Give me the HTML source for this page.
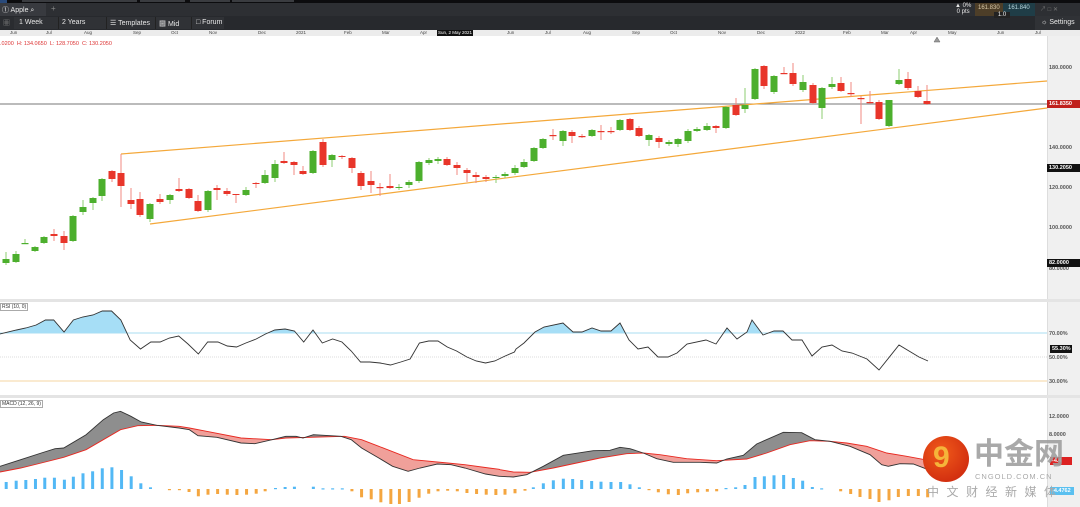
<!DOCTYPE html>
<html><head><meta charset="utf-8">
<style>
*{margin:0;padding:0;box-sizing:border-box}
body{width:1080px;height:507px;overflow:hidden;background:#fff;font-family:"Liberation Sans","Noto Sans CJK SC",sans-serif;position:relative}
.abs{position:absolute}
.t{color:#e8e8e8;font-size:7px;white-space:nowrap}
.ax{position:absolute;left:1049px;font-size:5.5px;color:#555;font-weight:bold}
.lbl{position:absolute;left:1047px;width:33px;height:8px;font-size:5.5px;color:#fff;font-weight:bold;padding-left:2px;line-height:8px}
</style></head><body>
<div class="abs" style="left:0;top:0;width:1080px;height:3px;background:#0c0c0e"></div>
<div class="abs" style="left:22px;top:0;width:115px;height:2px;background:#3a3c40"></div>
<div class="abs" style="left:140px;top:0;width:45px;height:2px;background:#3a3c40"></div>
<div class="abs" style="left:190px;top:0;width:40px;height:2px;background:#3a3c40"></div>
<div class="abs" style="left:232px;top:0;width:62px;height:2px;background:#3a3c40"></div>
<div class="abs" style="left:0;top:0;width:7px;height:3px;background:#2a4a7a"></div>
<div class="abs" style="left:0;top:3px;width:1080px;height:13px;background:#2d2f33"></div>
<div class="abs" style="left:0;top:3px;width:46px;height:13px;background:#383a3f"></div>
<div class="abs t" style="left:2px;top:5px">&#9312; Apple &#8981;</div>
<div class="abs t" style="left:51px;top:4px;color:#888;font-size:8px">+</div>
<div class="abs" style="left:0;top:16px;width:1080px;height:14px;background:#27292d"></div>
<div class="abs" style="left:0;top:17px;width:224px;height:12px;background:#303236"></div>
<div class="abs" style="left:0;top:17px;width:14px;height:12px;background:#2a2c30"></div>
<div class="abs t" style="left:3px;top:18px;color:#888">&#9638;</div>
<div class="abs t" style="left:19px;top:19px">1 Week</div>
<div class="abs" style="left:58px;top:17px;width:1px;height:12px;background:#222"></div>
<div class="abs t" style="left:62px;top:19px">2 Years</div>
<div class="abs" style="left:106px;top:17px;width:1px;height:12px;background:#222"></div>
<div class="abs t" style="left:110px;top:19px">&#9776; Templates</div>
<div class="abs" style="left:155px;top:17px;width:1px;height:12px;background:#222"></div>
<div class="abs t" style="left:159px;top:19px">&#9641; Mid</div>
<div class="abs" style="left:191px;top:17px;width:1px;height:12px;background:#222"></div>
<div class="abs t" style="left:196px;top:19px">&#9633; Forum</div>
<div class="abs" style="left:1035px;top:16px;width:45px;height:14px;background:#303236"></div>
<div class="abs t" style="left:1041px;top:19px">&#9788; Settings</div>
<div class="abs" style="left:948px;top:3px;width:27px;height:13px;background:#2d2f33"></div>
<div class="abs t" style="left:955px;top:3px;font-size:6px;line-height:6px">&#9650; 0%<br>&nbsp;0 pts</div>
<div class="abs" style="left:975px;top:3px;width:28px;height:13px;background:#4d3e28"></div>
<div class="abs t" style="left:978px;top:5px;font-size:6px;color:#d8c8a8">161.830</div>
<div class="abs" style="left:1003px;top:3px;width:32px;height:13px;background:#1f3d47"></div>
<div class="abs t" style="left:1008px;top:5px;font-size:6px;color:#b8d8e0">161.840</div>
<div class="abs" style="left:994px;top:12px;width:16px;height:6px;background:#222;color:#eee;font-size:6px;line-height:6px;text-align:center">1.0</div>
<div class="abs t" style="left:1040px;top:4px;color:#777;font-size:6px">&#8599; &#9633; &#10005;</div>
<div class="abs" style="left:0;top:30px;width:1080px;height:6px;background:#ececec;font-size:4.5px;color:#444;line-height:6px">
<span class="abs" style="left:10px">Jun</span><span class="abs" style="left:46px">Jul</span><span class="abs" style="left:84px">Aug</span><span class="abs" style="left:133px">Sep</span><span class="abs" style="left:171px">Oct</span><span class="abs" style="left:209px">Nov</span><span class="abs" style="left:258px">Dec</span><span class="abs" style="left:296px">2021</span><span class="abs" style="left:344px">Feb</span><span class="abs" style="left:382px">Mar</span><span class="abs" style="left:420px">Apr</span><span class="abs" style="left:437px;background:#111;color:#fff;padding:0 1px">Sun, 2 May 2021</span><span class="abs" style="left:507px">Jun</span><span class="abs" style="left:545px">Jul</span><span class="abs" style="left:583px">Aug</span><span class="abs" style="left:632px">Sep</span><span class="abs" style="left:670px">Oct</span><span class="abs" style="left:718px">Nov</span><span class="abs" style="left:757px">Dec</span><span class="abs" style="left:795px">2022</span><span class="abs" style="left:843px">Feb</span><span class="abs" style="left:881px">Mar</span><span class="abs" style="left:910px">Apr</span><span class="abs" style="left:948px">May</span><span class="abs" style="left:997px">Jun</span><span class="abs" style="left:1035px">Jul</span></div>
<div class="abs" style="left:0;top:41px;font-size:5.5px;color:#d33;white-space:nowrap">.0200 &nbsp;H: 134.0650 &nbsp;L: 128.7050 &nbsp;C: 130.2050</div>
<div class="abs" style="left:1047px;top:36px;width:33px;height:471px;background:#f0f0f0;border-left:1px solid #ddd"></div>
<div class="abs" style="left:0;top:299px;width:1080px;height:3px;background:#e4e4e4"></div>
<div class="abs" style="left:0;top:395px;width:1080px;height:3px;background:#e4e4e4"></div>
<svg id="s" class="abs" style="left:0;top:0" width="1080" height="507"></svg>
<div class="ax" style="top:65px">180.0000</div>
<div class="ax" style="top:145px">140.0000</div>
<div class="ax" style="top:185px">120.0000</div>
<div class="ax" style="top:225px">100.0000</div>
<div class="ax" style="top:266px">80.0000</div>
<div class="lbl" style="top:100px;background:#c0201c">161.8350</div>
<div class="lbl" style="top:164px;background:#111">130.2050</div>
<div class="lbl" style="top:259px;background:#111">82.0000</div>
<div class="ax" style="top:331px">70.00%</div>
<div class="ax" style="top:355px">50.00%</div>
<div class="ax" style="top:379px">30.00%</div>
<div class="lbl" style="top:345px;background:#111;left:1050px;width:22px">55.30%</div>
<div class="ax" style="top:414px">12.0000</div>
<div class="ax" style="top:432px">8.0000</div>
<div class="lbl" style="top:457px;background:#d22;left:1050px;width:22px">-4.4</div>
<div class="lbl" style="top:487px;background:#5ac0f0;left:1050px;width:24px">-4.4762</div>
<div class="abs" style="left:0;top:303px;font-size:5px;color:#333;border:1px solid #aaa;padding:0 1px">RSI (10, 0)</div>
<div class="abs" style="left:0;top:400px;font-size:5px;color:#333;border:1px solid #aaa;padding:0 1px">MACD (12, 26, 9)</div>
<div class="abs" style="left:923px;top:436px;width:46px;height:46px;border-radius:50%;background:radial-gradient(circle at 40% 35%,#f05a1a,#c8200c)"></div>
<div class="abs" style="left:933px;top:443px;font-size:30px;color:#f5b43a;font-weight:bold;line-height:30px">9</div>
<div class="abs" style="left:974px;top:437px;font-size:30px;color:#a0a0a0;font-weight:bold;line-height:36px;white-space:nowrap;opacity:.9">中金网</div>
<div class="abs" style="left:975px;top:472px;font-size:7.5px;color:#aaa;letter-spacing:1px;white-space:nowrap">CNGOLD.COM.CN</div>
<div class="abs" style="left:927px;top:483px;font-size:12px;color:#aaa;letter-spacing:7.5px;white-space:nowrap">中文财经新媒体</div>
<script>
var s=document.getElementById('s'),h='';
function L(x1,y1,x2,y2,c,w,extra){h+='<line x1="'+x1+'" y1="'+y1+'" x2="'+x2+'" y2="'+y2+'" stroke="'+c+'" stroke-width="'+(w||1)+'" '+(extra||'')+'/>';}
L(0,104,1047,104,'#777',1);
L(121,154,1047,81,'#f4a83a',1.2);L(121,154,121,157,'#f4a83a',1);
L(150,224,1047,108,'#f4a83a',1.2);
var C=[[6,263,259,252,265],[16,262,254,251,263],[25,243.5,243,239,244],[35,251,247,246,252],[44,243,237,236,244],[54,234,236,229,241],[64,236,243,231,250],[73,241,216,215,242],[83,212,207,200,215],[93,203,198,197,210],[102,196,179,178,201],[112,171,179,170,182],[121,173,186,154,207],[131,200,204,188,209],[140,199,215,192,217],[150,219,204,203,222],[160,199,202,194,204],[170,200,195,194,204],[179,189,191,178,192],[189,189,198,188,199],[198,201,211,195,212],[208,210,191,190,212],[217,188,190,185,200],[227,191,194,188,196],[236,194,195,194,203],[246,195,190,187,196],[256,183,184,182,188],[265,183,175,170,184],[275,178,164,160,182],[284,161,163,152,164],[294,162,165,161,175],[303,171,174,166,175],[313,173,151,150,174],[323,142,165,139,167],[332,160,155,154,167],[342,156,157,155,159],[352,158,168,157,173],[361,173,186,171,190],[371,181,185,171,193],[380,187,187.5,183,196],[390,186,188,174,189],[399,188,187,184,190],[409,185,182,180,188],[419,181,162,161,183],[429,163,160,158,165],[438,161,159,157,164],[447,159,165,157,166],[457,165,168,162,175],[467,170,173,168,182],[476,175,177,172,183],[486,177,179,175,182],[496,178,177,175,183],[505,176,174,172,178],[515,173,168,165,175],[524,167,162,159,168],[534,161,148,147,162],[543,148,139,138,149],[553,135,135.5,129,140],[563,141,131,130,146],[572,132,136,130,143],[582,136,136.5,134,138],[592,136,130,129,137],[601,131,131.5,125,140],[611,131,131.5,127,134],[620,130,120,119,131],[630,119,130,118,131],[639,128,136,126,137],[649,140,135,134,146],[659,138,142,136,148],[669,144,142,140,146],[678,144,139,138,147],[688,141,131,129,143],[697,131,129,127,132],[707,130,126,123,131],[716,126,128,125,133],[726,128,107,106,129],[736,105,115,98,116],[745,109,105,88,113],[755,99,69,68,100],[764,66,86,65,89],[774,92,76,75,94],[784,73,73.5,67,74],[793,73,84,63,86],[803,90,82,75,92],[813,85,103,83,104],[822,108,88,87,119],[832,87,84,77,89],[841,83,91,77,92],[851,93,93.5,82,97],[861,98,98.5,96,124],[870,102,102.5,91,104],[879,102,119,100,120],[889,126,100,100,127],[899,84,80,69,85],[908,79,88,72,90],[918,91,97,86,98],[927,101,104,85,105]];
C.forEach(function(c){var x=c[0],o=c[1],cl=c[2],g=cl<=o,col=g?'#4caf2d':'#e8352a',wc=g?'#8ccc70':'#f08a80';
L(x,c[3],x,c[4],wc,1);var t=Math.min(o,cl),b=Math.max(o,cl);if(b-t<1)b=t+1.2;
h+='<rect x="'+(x-3.5)+'" y="'+t+'" width="7" height="'+(b-t)+'" fill="'+col+'"/>';});
L(0,333,1047,333,'#a8dcf0',1);L(0,357,1047,357,'#bbb',0.6,'stroke-dasharray="1,1"');L(0,381,1047,381,'#f6d6a0',1);
var R=[[0,334],[16,330],[25,328],[35,325],[44,320],[52,320],[62,332],[71,320],[80,317],[90,315],[99,311],[108,311],[117,320],[126,340],[136,349],[146,342],[155,342],[164,338],[173,336],[182,344],[192,354],[201,342],[211,342],[220,346],[229,347],[238,343],[248,339],[257,334],[266,330],[276,329],[285,331],[294,342],[303,330],[312,343],[322,339],[331,342],[340,351],[349,362],[358,362],[368,363],[378,365],[388,362],[397,359],[406,343],[415,341],[424,341],[433,347],[442,351],[452,357],[461,361],[470,363],[479,361],[489,356],[498,352]].map(function(p){return [p[0]*1.033,p[1]]});
R=R.concat([[516,349],[524,343],[535,332],[544,327],[563,323],[573,332],[582,332],[592,328],[601,331],[611,331],[620,323],[629,340],[638,349],[648,347],[658,357],[668,357],[677,353],[687,344],[706,340],[716,344],[727,328],[737,339],[747,332],[752,320],[763,335],[774,331],[783,331],[792,340],[802,340],[812,356],[822,347],[832,345],[842,351],[852,353],[867,359],[879,370],[899,345],[919,357],[928,361]]);
var rp=R.map(function(p){return p.join(',')}).join(' ');
h+='<clipPath id="ca"><rect x="0" y="300" width="1047" height="33"/></clipPath>';
h+='<polygon points="0,333 '+rp+' 928,333" fill="#a6def6" clip-path="url(#ca)"/>';
h+='<polyline points="'+rp+'" fill="none" stroke="#333" stroke-width="0.9"/>';
function z7(a){return a.map(function(p){return [p[0]/2.904,p[1]/3+298]})}
function z8(a){return a.map(function(p){return [p[0]/3+500,p[1]/3+298]})}
var M=z7([[0,505],[60,485],[120,465],[160,452],[185,450],[250,410],[300,365],[330,345],[350,340],[380,355],[410,372],[455,382],[520,390],[550,395],[575,413],[630,418],[700,435],[740,437],[790,425],[830,415],[860,415],[880,420],[910,410],[990,415],[1020,425],[1050,450],[1100,480],[1140,505],[1185,520],[1220,510],[1270,498],[1310,500],[1350,510],[1410,528],[1450,535]]).concat(z8([[0,535],[40,537],[80,530],[130,505],[190,472],[280,458],[330,457],[360,448],[390,452],[430,465],[470,482],[520,493],[600,493],[650,495],[680,483],[730,472],[770,438],[850,403],[905,404],[945,425],[990,430],[1050,445],[1110,470],[1145,500],[1165,505],[1200,497],[1240,498],[1285,515]]));
var S=z7([[0,522],[60,510],[120,495],[185,478],[250,455],[300,425],[350,395],[400,383],[455,382],[520,385],[550,390],[600,400],[700,420],[790,425],[830,420],[1000,415],[1050,425],[1100,445],[1200,485],[1300,495],[1350,500],[1420,510],[1450,514]]).concat(z8([[0,515],[40,522],[90,523],[160,510],[230,495],[300,480],[380,467],[430,465],[480,470],[560,482],[650,488],[740,483],[800,465],[870,440],[930,428],[990,430],[1040,435],[1100,445],[1160,465],[1220,475],[1285,487]]));
function pts(a){return a.map(function(p){return p[0].toFixed(1)+','+p[1].toFixed(1)}).join(' ')}
var Sr=S.slice().reverse();
h+='<clipPath id="up"><polygon points="0,398 '+pts(S)+' 930,398"/></clipPath>';
h+='<clipPath id="dn"><polygon points="0,507 '+pts(S)+' 930,507"/></clipPath>';
var area=pts(M)+' '+pts(Sr);
h+='<polygon points="'+area+'" fill="#8e8e8e" clip-path="url(#up)"/>';
h+='<polygon points="'+area+'" fill="#f0a09a" clip-path="url(#dn)"/>';
h+='<polyline points="'+pts(S)+'" fill="none" stroke="#e82820" stroke-width="0.9"/>';
h+='<polyline points="'+pts(M)+'" fill="none" stroke="#333" stroke-width="0.9"/>';
var z=489;
var H7=[[18,552],[47,548],[75,546],[103,543],[130,539],[158,539],[187,545],[213,536],[241,526],[269,520],[297,511],[325,508],[353,516],[381,535],[409,556],[437,568],[492,576],[521,576],[549,582],[576,595],[604,590],[632,588],[660,590],[688,591],[716,590],[744,587],[770,580],[800,570],[828,567],[855,566],[910,566],[938,571],[966,571],[994,571],[1022,580],[1050,598],[1078,604],[1106,613],[1135,618],[1160,618],[1188,612],[1217,599],[1245,587],[1272,580],[1300,578],[1328,580],[1356,585],[1384,588],[1412,590],[1440,591]];
var H8=[[15,590],[45,586],[75,578],[100,568],[130,556],[160,547],[190,542],[218,543],[245,546],[275,549],[303,551],[333,552],[362,552],[390,559],[418,568],[447,576],[475,583],[505,589],[535,591],[563,586],[593,583],[622,581],[650,580],[678,570],[707,568],[735,561],[765,537],[793,535],[822,532],[851,531],[880,540],[908,548],[937,567],[965,571],[1022,580],[1052,588],[1080,597],[1110,603],[1137,612],[1167,607],[1195,597],[1225,594],[1255,594],[1283,598]];
function bar(x,y,blue){var t=Math.min(y,z),b=Math.max(y,z);if(b-t<1.2)b=t+1.2;
h+='<rect x="'+(x-1.5)+'" y="'+t.toFixed(1)+'" width="3" height="'+(b-t).toFixed(1)+'" fill="'+(blue?'#52b8f5':'#f4a640')+'"/>';}
H7.forEach(function(p){var y=p[1]/3+298,x=p[0]/2.904;bar(x,y,p[1]<573)});
H8.forEach(function(p){var y=p[1]/3+298,x=p[0]/3+500;bar(x,y,p[1]<573)});
h+='<polygon points="934,42 937,37 940,42" fill="#999" stroke="#666" stroke-width="0.5"/>';
s.innerHTML=h;
</script>
</body></html>
